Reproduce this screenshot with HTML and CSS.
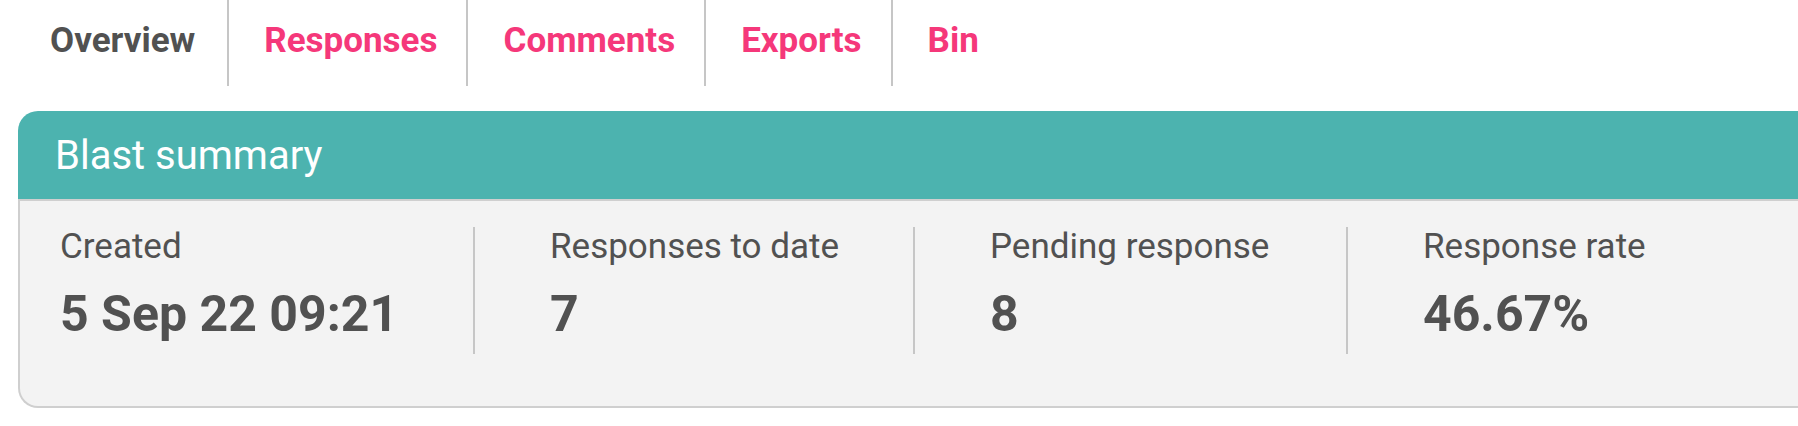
FILE: index.html
```html
<!DOCTYPE html>
<html lang="en">
<head>
    <meta charset="UTF-8">
    <meta name="viewport" content="width=device-width, initial-scale=1.0">
    <title>Blast summary</title>
    <link rel="stylesheet" href="styles.css">
</head>
<body>
    <nav class="tabs">
        <a class="tab active" href="#">Overview</a>
        <a class="tab" href="#">Responses</a>
        <a class="tab" href="#">Comments</a>
        <a class="tab" href="#">Exports</a>
        <a class="tab last" href="#">Bin</a>
    </nav>

    <div class="card">
        <div class="card-head">Blast summary</div>
        <div class="card-body">
            <div class="stats">
                <div class="stat first">
                    <div class="stat-label">Created</div>
                    <div class="stat-value">5 Sep 22 09:21</div>
                </div>
                <div class="stat">
                    <div class="stat-label">Responses to date</div>
                    <div class="stat-value">7</div>
                </div>
                <div class="stat">
                    <div class="stat-label">Pending response</div>
                    <div class="stat-value">8</div>
                </div>
                <div class="stat">
                    <div class="stat-label">Response rate</div>
                    <div class="stat-value">46.67%</div>
                </div>
            </div>
        </div>
    </div>
</body>
</html>
```

FILE: styles.css
```css
html, body {
    overflow: hidden;
}
body {
    font-family: Roboto, "Liberation Sans", sans-serif;
    margin: 0;
    background-color: #fff;
    color: #515151;
}
.tabs {
    display: flex;
    height: 86px;
    padding-left: 15px;
}
.tab {
    display: flex;
    align-items: center;
    padding: 0 29px 6px 35px;
    border-right: 2px solid #c6c6c6;
    font-size: 35px;
    font-weight: 700;
    color: #f5387a;
    text-decoration: none;
}
.tab.active {
    color: #515151;
    padding-right: 32px;
}
.tab.last {
    border-right: none;
}
.card {
    margin: 25px -40px 0 18px;
    border-radius: 20px;
}
.card-head {
    height: 88px;
    display: flex;
    align-items: center;
    padding-left: 37px;
    background: #4cb3af;
    color: #fff;
    font-size: 40px;
    border-radius: 20px 20px 0 0;
    border-bottom: 2px solid #cfcfcf;
}
.card-body {
    background: #f3f3f3;
    border: 2px solid #cfcfcf;
    border-top: none;
    border-radius: 0 0 20px 20px;
    padding: 26px 0 52px 40px;
}
.stats {
    display: grid;
    grid-template-columns: 413px 440px 433px 1fr;
}
.stat {
    height: 127px;
    padding-left: 75px;
    border-left: 2px solid #c6c6c6;
}
.stat.first {
    padding-left: 0;
    border-left: none;
}
.stat-label {
    font-size: 35px;
    line-height: 40px;
    margin-bottom: 18px;
}
.stat-value {
    font-size: 50px;
    line-height: 58px;
    font-weight: 700;
}
```
